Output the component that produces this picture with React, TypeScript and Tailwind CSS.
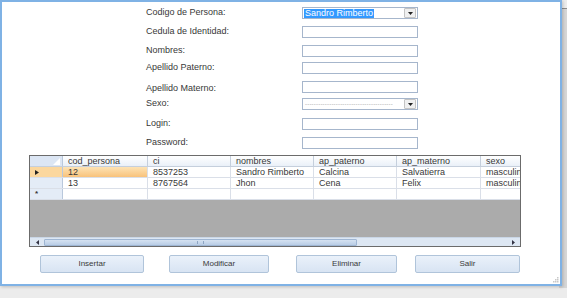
import React from 'react';

const campos = [
  { label: 'Codigo de Persona:', tipo: 'combo', valor: 'Sandro Rimberto', gap: 'mt-[7px]' },
  { label: 'Cedula de Identidad:', tipo: 'text', gap: 'mt-[7px]' },
  { label: 'Nombres:', tipo: 'text', gap: 'mt-[7px]' },
  { label: 'Apellido Paterno:', tipo: 'text', gap: 'mt-[5px]' },
  { label: 'Apellido Materno:', tipo: 'text', gap: 'mt-[7px]' },
  { label: 'Sexo:', tipo: 'combo2', gap: 'mt-[5px]' },
  { label: 'Login:', tipo: 'text', gap: 'mt-[8px]' },
  { label: 'Password:', tipo: 'text', gap: 'mt-[7px]' },
];

const columnas = [
  { nombre: 'cod_persona', w: 'w-[85px]' },
  { nombre: 'ci', w: 'w-[83px]' },
  { nombre: 'nombres', w: 'w-[83px]' },
  { nombre: 'ap_paterno', w: 'w-[83px]' },
  { nombre: 'ap_materno', w: 'w-[84px]' },
  { nombre: 'sexo', w: 'w-[84px]' },
];

const personas = [
  ['12', '8537253', 'Sandro Rimberto', 'Calcina', 'Salvatierra', 'masculino'],
  ['13', '8767564', 'Jhon', 'Cena', 'Felix', 'masculino'],
];

function Flecha() {
  return (
    <div className="w-[12px] h-[10px] flex items-center justify-center bg-[#f0f0f0] border border-[#c4c4c4] rounded-[1px]">
      <svg width="5" height="3" viewBox="0 0 5 3">
        <path d="M0 0 L5 0 L2.5 3 Z" fill="#222" />
      </svg>
    </div>
  );
}

function Campo({ tipo, valor }: { tipo: string; valor?: string }) {
  if (tipo === 'combo') {
    return (
      <div className="w-[116px] h-[12px] border border-[#a6b6cc] bg-white flex items-center justify-between pl-[1px] pr-[1px]">
        <span className="bg-[#3399ff] text-white leading-[9px] px-[1px]">{valor}</span>
        <Flecha />
      </div>
    );
  }
  if (tipo === 'combo2') {
    return (
      <div className="w-[116px] h-[12px] border border-[#a6b6cc] bg-white flex items-center justify-between pl-[2px] pr-[1px]">
        <span className="text-[#9a9a9a] leading-[9px] text-[6px] tracking-[0.2px] whitespace-nowrap">
          ----------------------------------------
        </span>
        <Flecha />
      </div>
    );
  }
  return <div className="w-[116px] h-[12px] border border-[#a6b6cc] bg-white" />;
}

export default function App() {
  return (
    <div
      className="w-[567px] h-[298px] bg-[#ececec] relative overflow-hidden text-[9px] text-[#383838]"
      style={{ fontFamily: '"Liberation Sans", Arial, sans-serif' }}
    >
      <div className="absolute right-0 top-[8px] w-[8px] h-[280px] bg-[#d6d6d6] border-t border-[#8c8c8c]" />
      <div className="absolute left-0 top-0 w-[562px] h-[286px] bg-white border-2 border-[#7fb2e5] shadow-[1px_1px_3px_rgba(0,0,0,0.2)] flex flex-col">
        <div className="flex flex-col pl-[144px]">
          {campos.map((c, i) => (
            <div key={i} className={`flex items-center h-[12px] ${i === 0 ? 'mt-[5px]' : c.gap}`}>
              <div className={`w-[156px] ${i === 4 ? 'pt-[3px]' : ''}`}>{c.label}</div>
              <Campo tipo={c.tipo} valor={c.valor} />
            </div>
          ))}
        </div>

        <div className="ml-[27px] mt-[6px] w-[492px] h-[92px] border border-[#6b6b6b] bg-[#ababab] flex flex-col overflow-hidden">
          <div className="flex h-[11px] bg-gradient-to-b from-[#ffffff] to-[#eaf0f8] border-b border-[#c5cfdc] shrink-0">
            <div className="w-[33px] shrink-0 bg-[#dce6f4] border-r border-[#b9c8dc] relative">
              <svg className="absolute right-[2px] bottom-[1px]" width="7" height="7" viewBox="0 0 7 7">
                <path d="M7 0 L7 7 L0 7 Z" fill="#fff" />
              </svg>
            </div>
            {columnas.map((col, i) => (
              <div key={i} className={`${col.w} shrink-0 border-r border-[#c5cfdc] pl-[5px] leading-[11px] whitespace-nowrap overflow-hidden`}>
                {col.nombre}
              </div>
            ))}
          </div>
          {personas.map((p, r) => (
            <div key={r} className="flex h-[11px] bg-white border-b border-[#dadfe8] shrink-0">
              <div className={`w-[33px] shrink-0 border-r border-[#b9c8dc] flex items-center pl-[5px] ${r === 0 ? 'bg-[#fbd79e]' : 'bg-[#e4ecf7]'}`}>
                {r === 0 && (
                  <svg width="4" height="5" viewBox="0 0 4 5">
                    <path d="M0 0 L4 2.5 L0 5 Z" fill="#222" />
                  </svg>
                )}
              </div>
              {p.map((v, i) => (
                <div
                  key={i}
                  className={`${columnas[i].w} shrink-0 border-r border-[#dadfe8] pl-[5px] leading-[10px] whitespace-nowrap overflow-hidden ${r === 0 && i === 0 ? 'bg-gradient-to-b from-[#fde3b4] to-[#f8c27a]' : ''}`}
                >
                  {v}
                </div>
              ))}
            </div>
          ))}
          <div className="flex h-[11px] bg-white border-b border-[#dadfe8] shrink-0">
            <div className="w-[33px] shrink-0 bg-[#e4ecf7] border-r border-[#b9c8dc] flex items-center pl-[5px]">
              <span className="text-[8px] leading-[8px] font-bold">*</span>
            </div>
            {columnas.map((col, i) => (
              <div key={i} className={`${col.w} shrink-0 border-r border-[#dadfe8]`} />
            ))}
          </div>
          <div className="flex-1" />
          <div className="h-[9px] bg-[#dde7f3] border-t border-[#c9d6e6] flex items-center shrink-0">
            <div className="w-[14px] flex justify-center">
              <svg width="3" height="5" viewBox="0 0 3 5">
                <path d="M3 0 L0 2.5 L3 5 Z" fill="#334" />
              </svg>
            </div>
            <div className="w-[313px] h-[7px] bg-gradient-to-b from-[#d5e2f1] to-[#b9cde6] border border-[#9fb6d3] rounded-[1px] flex items-center justify-center">
              <div className="w-[7px] h-[3px] border-x border-[#8ea6c4]" />
            </div>
            <div className="flex-1" />
            <div className="w-[14px] flex justify-center">
              <svg width="3" height="5" viewBox="0 0 3 5">
                <path d="M0 0 L3 2.5 L0 5 Z" fill="#334" />
              </svg>
            </div>
          </div>
        </div>

        <div className="flex mt-[8px] ml-[38px] text-[8px]">
          <button className="w-[104px] h-[18px] rounded-[2px] border border-[#b0c4da] bg-gradient-to-b from-[#eaf1fa] to-[#d8e4f3] text-[#3a3a3a]">Insertar</button>
          <button className="ml-[25px] w-[100px] h-[18px] rounded-[2px] border border-[#b0c4da] bg-gradient-to-b from-[#eaf1fa] to-[#d8e4f3] text-[#3a3a3a]">Modificar</button>
          <button className="ml-[27px] w-[101px] h-[18px] rounded-[2px] border border-[#b0c4da] bg-gradient-to-b from-[#eaf1fa] to-[#d8e4f3] text-[#3a3a3a]">Eliminar</button>
          <button className="ml-[18px] w-[105px] h-[18px] rounded-[2px] border border-[#b0c4da] bg-gradient-to-b from-[#eaf1fa] to-[#d8e4f3] text-[#3a3a3a]">Salir</button>
        </div>
        <div className="flex-1" />
        <div className="flex justify-end pr-[1px] pb-[1px]">
          <svg width="7" height="7" viewBox="0 0 7 7">
            <rect x="5" y="1" width="1.5" height="1.5" fill="#c8c8c8" />
            <rect x="3" y="3" width="1.5" height="1.5" fill="#c8c8c8" />
            <rect x="5" y="3" width="1.5" height="1.5" fill="#c8c8c8" />
            <rect x="1" y="5" width="1.5" height="1.5" fill="#c8c8c8" />
            <rect x="3" y="5" width="1.5" height="1.5" fill="#c8c8c8" />
            <rect x="5" y="5" width="1.5" height="1.5" fill="#c8c8c8" />
          </svg>
        </div>
      </div>
    </div>
  );
}
